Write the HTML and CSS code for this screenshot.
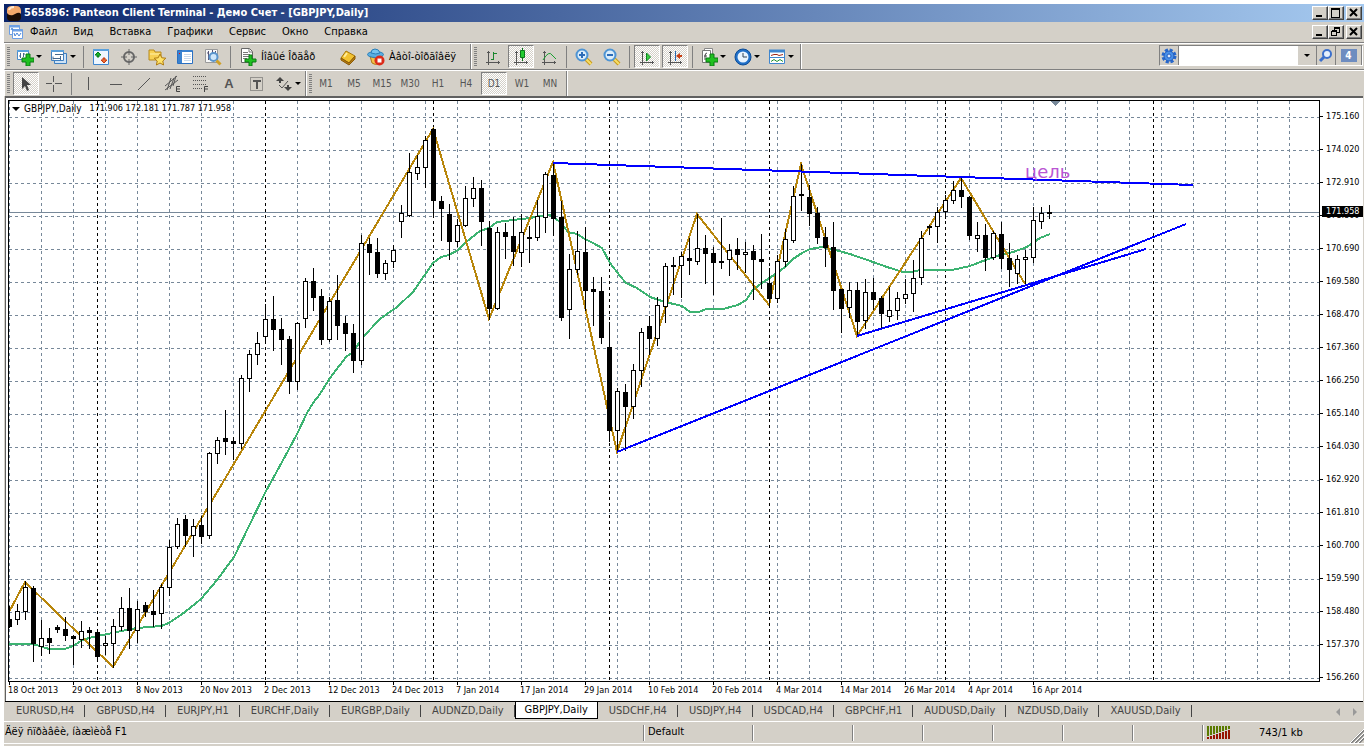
FILE: index.html
```html
<!DOCTYPE html>
<html lang="ru">
<head>
    <meta charset="UTF-8">
    <meta name="viewport" content="width=device-width, initial-scale=1.0">
    <title>565896: Panteon Client Terminal</title>
    <link rel="stylesheet" href="styles.css">
</head>
<body>
    <div class="window">
        <header class="title-bar">
            <svg class="app-icon" width="16" height="16" viewBox="0 0 16 16">
                <rect x="1" y="7" width="14" height="9" rx="4" fill="#1c0d05"/>
                <path d="M1 8V5q0-4 5-4h4q5 0 5 5v3q-1-2-4-1l-4 2q-4 1-6-2z" fill="#f4a86a"/>
                <path d="M3 5q1-3 5-3" stroke="#ffe9cf" stroke-width="2" fill="none"/>
            </svg>
            <h1>565896: Panteon Client Terminal - Демо Счет - [GBPJPY,Daily]</h1>
            <div class="window-buttons">
                <button aria-label="Minimize"><svg width="10" height="10"><path d="M1 8h6" stroke="#000" stroke-width="2"/></svg></button>
                <button aria-label="Maximize"><svg width="10" height="10" shape-rendering="crispEdges"><path d="M.5 1v8.500h8V1" stroke="#000" fill="none"/><path d="M0 1h9" stroke="#000" stroke-width="2"/></svg></button>
                <button class="close" aria-label="Close"><svg width="10" height="10"><path d="M1 1l7 7M8 1l-7 7" stroke="#000" stroke-width="2"/></svg></button>
            </div>
        </header>

        <nav class="menu-bar">
            <svg class="menu-icon" width="16" height="16" viewBox="0 0 16 16">
                <g fill="#fff" stroke="#6c9fe4"><path d="M1.500 1.500h10v9h-10z"/><path d="M4.500 5.500h10v9h-10z"/></g>
                <path d="M1 2.500h11M4 6.500h11" stroke="#6c9fe4" stroke-width="2"/>
                <path d="M3 6l1-2 1 2M6 9l1 3 2-3 2 3 2-3" stroke="#4a86d8" fill="none"/>
            </svg>
            <a href="#">Файл</a>
            <a href="#">Вид</a>
            <a href="#">Вставка</a>
            <a href="#">Графики</a>
            <a href="#">Сервис</a>
            <a href="#">Окно</a>
            <a href="#">Справка</a>
            <div class="window-buttons">
                <button aria-label="Minimize chart"><svg width="10" height="10"><path d="M1 8h6" stroke="#000" stroke-width="2"/></svg></button>
                <button aria-label="Restore chart"><svg width="10" height="10" shape-rendering="crispEdges"><path d="M3.500 3V.5h5v5H6M3 1.500h6M.5 4v4.500h5v-5h-5M0 4.500h6" stroke="#000" fill="none"/></svg></button>
                <button class="close" aria-label="Close chart"><svg width="10" height="10"><path d="M1 1l7 7M8 1l-7 7" stroke="#000" stroke-width="2"/></svg></button>
            </div>
        </nav>

        <div class="toolbar-row">
            <div class="toolbar">
                <i class="grip"></i>
                <button class="tool drop" aria-label="New chart">
                    <svg width="18" height="18"><path d="M1.500 2.500h11v9h-11z" fill="#fff" stroke="#4a8ccb"/><path d="M1 3h12" stroke="#5aa0dc" stroke-width="2"/><path d="M4.500 5v5M3 8h2M7.500 5v4M7 6h2" stroke="#46698c"/><path d="M10 6h4v4h4v4h-4v4h-4v-4H6v-4h4z" fill="#20c020" stroke="#0a7a14"/></svg>
                </button>
                <button class="tool drop" aria-label="Profiles">
                    <svg width="18" height="18"><path d="M4.500 5.500h12v10h-12z" fill="#cfe3f6" stroke="#3f7fc0"/><path d="M1.500 2.500h12v10h-12z" fill="#fff" stroke="#3f7fc0"/><path d="M1 3h13" stroke="#5aa0dc" stroke-width="2"/><path d="M3 10.500h8M3 8.500v3M10.500 8v4M5 6.500h8" stroke="#46698c"/></svg>
                </button>
                <i class="sep"></i>
                <button class="tool" aria-label="Market watch">
                    <svg width="18" height="18"><path d="M1.500 1.500h15v15h-15z" fill="#eef6ff" stroke="#3f86cf"/><path d="M1 2h16" stroke="#5aa0dc" stroke-width="2"/><path d="M6 4l3 3H7v2H5V7H3z" fill="#18b428" stroke="#087a18"/><path d="M12 15l-3-3h2v-2h2v2h2z" fill="#f07038" stroke="#c03a10"/></svg>
                </button>
                <button class="tool" aria-label="Data window">
                    <svg width="18" height="18" fill="none" stroke="#666"><circle cx="9" cy="9" r="5" stroke-width="2"/><path d="M9 1v6M9 11v6M1 9h6M11 9h6" stroke-width="1"/></svg>
                </button>
                <button class="tool" aria-label="Navigator">
                    <svg width="18" height="18"><path d="M1 2h5l1 2h6v8H1z" fill="#f7d154" stroke="#b78a1c"/><path d="M2 6h10" stroke="#fff0a8"/><path d="M12 6l1.800 3.800 4 .4-3 2.800.8 4-3.600-2-3.600 2 .8-4-3-2.800 4-.4z" fill="#ffe36a" stroke="#b07c10"/></svg>
                </button>
                <button class="tool" aria-label="Terminal">
                    <svg width="18" height="18"><path d="M1.500 2.500h15v13h-15z" fill="#fff" stroke="#2a70c2"/><path d="M2 3h4v12H2z" fill="#3a82d0"/><path d="M6 3h10" stroke="#3a82d0" stroke-width="2"/><path d="M8 6.500h7M8 8.500h7M8 10.500h7M8 12.500h7" stroke="#c8d8ea"/><path d="M3 5.500h1" stroke="#f00"/></svg>
                </button>
                <button class="tool" aria-label="Strategy tester">
                    <svg width="18" height="18"><path d="M1.500 1.500h12v13h-12z" fill="#f8f8f8" stroke="#9a9a9a"/><path d="M4.500 3v9M3 5h2M8.500 2v5M11.500 3v6" stroke="#557"/><circle cx="9.500" cy="9" r="4" fill="#cfe6fa" stroke="#5a94cc" stroke-width="2"/><path d="M12.500 12.500l4 4" stroke="#cfa028" stroke-width="3"/></svg>
                </button>
                <i class="sep"></i>
                <button class="tool wide">
                    <svg width="18" height="18"><path d="M2.500 .5h8l3 3v11h-11z" fill="#fff" stroke="#666"/><path d="M10 1v3h3M4 4.500h5M4 6.500h7M4 8.500h6M4 10.500h4" stroke="#777" fill="none"/><path d="M10 7h3v4h4v3h-4v4h-3v-4H6v-3h4z" fill="#20c020" stroke="#0a7a14"/></svg>
                    Íîâûé Îðäåð
                </button>
                <button class="tool" aria-label="MetaEditor">
                    <svg width="18" height="18"><path d="M2 10l5-7 9 5-6 7z" fill="#f2c230" stroke="#a87708"/><path d="M2 10l8 5 6-7v3l-6 6-8-5z" fill="#b77d10" stroke="#8a5a08"/><path d="M5 9l3-4" stroke="#ffec9a" stroke-width="2"/></svg>
                </button>
                <button class="tool wide">
                    <svg width="18" height="18"><path d="M3 8q6 4 12 0l-2 7q-5 3-8 0z" fill="#f2c14a" stroke="#b07a18"/><ellipse cx="8.500" cy="6.500" rx="8" ry="3" fill="#5aaee0" stroke="#2a7eb8"/><path d="M4 5q0-4 4-4t5 4q-4 2-9 0z" fill="#78c4ee" stroke="#2a7eb8"/><circle cx="12.500" cy="12.500" r="5" fill="#dc2a18"/><path d="M10.500 10.500h4v4h-4z" fill="#fff"/></svg>
                    Àâòî-òîðãîâëÿ
                </button>
            </div>
            <div class="toolbar">
                <i class="grip"></i>
                <button class="tool" aria-label="Bar chart">
                    <svg width="18" height="18" fill="none"><path d="M4.500 3v14M2 14.500h14M3 4.500h3M14.500 13v3" stroke="#555"/><path d="M9.500 4v8M7 11.500h2M10 5.500h3" stroke="#18862c"/></svg>
                </button>
                <button class="tool pressed" aria-label="Candlesticks">
                    <svg width="18" height="18" fill="none"><path d="M4.500 3v14M2 14.500h14M3 4.500h3M14.500 13v3" stroke="#555"/><path d="M10.500 0v13" stroke="#087818"/><path d="M8.500 2.500h4v7h-4z" fill="#22cc30" stroke="#087818"/></svg>
                </button>
                <button class="tool" aria-label="Line chart">
                    <svg width="18" height="18" fill="none"><path d="M4.500 3v14M2 14.500h14M3 4.500h3M14.500 13v3" stroke="#555"/><path d="M3 12q6-10 9-5l4 4" stroke="#18a030"/></svg>
                </button>
                <i class="sep"></i>
                <button class="tool" aria-label="Zoom in">
                    <svg width="18" height="18"><path d="M11 11l5 5" stroke="#c89a1c" stroke-width="4"/><path d="M11 11l5 5" stroke="#f6de68" stroke-width="2"/><circle cx="7" cy="7" r="5.500" fill="#dceefb" stroke="#4e94d4" stroke-width="2"/><path d="M4 7h6M7 4v6" stroke="#2c6cb8" stroke-width="2"/></svg>
                </button>
                <button class="tool" aria-label="Zoom out">
                    <svg width="18" height="18"><path d="M11 11l5 5" stroke="#c89a1c" stroke-width="4"/><path d="M11 11l5 5" stroke="#f6de68" stroke-width="2"/><circle cx="7" cy="7" r="5.500" fill="#dceefb" stroke="#4e94d4" stroke-width="2"/><path d="M4 7h6" stroke="#2c6cb8" stroke-width="2"/></svg>
                </button>
                <i class="sep"></i>
                <button class="tool pressed" aria-label="Auto scroll">
                    <svg width="18" height="18" fill="none"><path d="M4.500 3v14M2 14.500h14M3 4.500h3M14.500 13v3" stroke="#555"/><path d="M8.500 5l4 4-4 4z" fill="#38d040" stroke="#0c8420"/></svg>
                </button>
                <button class="tool pressed" aria-label="Chart shift">
                    <svg width="18" height="18" fill="none"><path d="M4.500 3v14M2 14.500h14M3 4.500h3M14.500 13v3" stroke="#555"/><path d="M9.500 3v10" stroke="#2868b0"/><path d="M10 8l4-3v2h2v2h-2v2z" fill="#c83c10"/></svg>
                </button>
                <i class="sep"></i>
                <button class="tool drop" aria-label="Indicators">
                    <svg width="18" height="18"><path d="M4.500 .5h8v12h-8z" fill="#fff" stroke="#888"/><path d="M2.500 2.500h8v12h-8z" fill="#fff" stroke="#777"/><path d="M7 5q-2 0-2 3v4M4 8h3" stroke="#444" fill="none"/><path d="M10 6h4v4h4v4h-4v4h-4v-4H6v-4h4z" fill="#20c020" stroke="#0a7a14"/></svg>
                </button>
                <button class="tool drop" aria-label="Periods">
                    <svg width="18" height="18"><circle cx="9" cy="9" r="8" fill="#1f6fc8" stroke="#0c4c96"/><circle cx="9" cy="9" r="5.500" fill="#e8f4ff"/><path d="M9 5v4h4" stroke="#345" fill="none"/></svg>
                </button>
                <button class="tool drop" aria-label="Templates">
                    <svg width="18" height="18"><path d="M1.500 2.500h15v13h-15z" fill="#fff" stroke="#3f86cf"/><path d="M1 3h16" stroke="#3f86cf" stroke-width="3"/><path d="M1 9.500h16" stroke="#3f86cf"/><path d="M3 7.500l3-1h3l2 1 4-1" stroke="#a02818" fill="none"/><path d="M3 13.500l3-2 3 2 3-2 3 2" stroke="#209030" fill="none"/></svg>
                </button>
            </div>
            <form class="search">
                <button type="button" class="gear" aria-label="Search options"><svg width="16" height="16"><circle cx="8" cy="8" r="6" fill="none" stroke="#2868cc" stroke-width="3" stroke-dasharray="3 1.700"/><circle cx="8" cy="8" r="5" fill="#4a90e8" stroke="#1f5cc0"/><circle cx="8" cy="8" r="2" fill="#dceafe" stroke="#1f5cc0"/></svg></button>
                <input type="text" aria-label="Search">
                <button type="button" aria-label="Search history"><i class="arrow"></i></button>
                <button type="button" aria-label="Find"><svg width="16" height="16"><circle cx="9" cy="6" r="4" fill="#e6f0fd" stroke="#3c70cc" stroke-width="2"/><path d="M6 9l-4 4" stroke="#3c70cc" stroke-width="3"/></svg></button>
                <button type="button" class="notes" aria-label="Messages"><span>4</span></button>
            </form>
        </div>

        <div class="toolbar-row second">
            <div class="toolbar">
                <i class="grip"></i>
                <button class="tool pressed" aria-label="Cursor">
                    <svg width="18" height="18"><path d="M5 2v12l3-3 2 5 2-1-2-5h4z" fill="#444"/></svg>
                </button>
                <button class="tool" aria-label="Crosshair">
                    <svg width="18" height="18"><path d="M8.500 1v6M8.500 10v7M1 8.500h6M10 8.500h7" stroke="#555"/></svg>
                </button>
                <i class="sep"></i>
                <button class="tool" aria-label="Vertical line"><svg width="18" height="18"><path d="M8.500 2v13" stroke="#555"/></svg></button>
                <button class="tool" aria-label="Horizontal line"><svg width="18" height="18"><path d="M2 9.500h12" stroke="#555"/></svg></button>
                <button class="tool" aria-label="Trendline"><svg width="18" height="18"><path d="M2 15L14 3" stroke="#555"/></svg></button>
                <button class="tool" aria-label="Channel"><svg width="18" height="18"><path d="M1 11L13 1M1 15L14 5M3 15L7 3M6 14l4-11M9 11l3-10" stroke="#555"/><path d="M16 11.500h-3.500v5H16M13 14h3" stroke="#444" fill="none"/></svg></button>
                <button class="tool" aria-label="Fibonacci"><svg width="18" height="18"><path d="M1 1.500h14M1 5.500h14M1 9.500h14M1 13.500h10" stroke="#555" stroke-dasharray="1 1"/><path d="M16 11.500h-3.500V17M13 14h3" stroke="#444" fill="none"/></svg></button>
                <button class="tool letter">A</button>
                <button class="tool" aria-label="Text label"><svg width="18" height="18"><path d="M2.500 2.500h12v13h-12z" fill="none" stroke="#555" stroke-dasharray="1 1"/><path d="M5 6h8M9 6v8" stroke="#555" stroke-width="2"/></svg></button>
                <button class="tool drop" aria-label="Arrows"><svg width="18" height="18"><path d="M5 2l4 4H6v2H4V6H1zM13 16l-4-4h3v-2h2v2h3z" fill="#444"/><path d="M4 10l3 3 6-7" stroke="#555" fill="none"/></svg></button>
            </div>
            <div class="toolbar periods">
                <i class="grip"></i>
                <button class="tool">M1</button>
                <button class="tool">M5</button>
                <button class="tool">M15</button>
                <button class="tool">M30</button>
                <button class="tool">H1</button>
                <button class="tool">H4</button>
                <button class="tool pressed">D1</button>
                <button class="tool">W1</button>
                <button class="tool">MN</button>
            </div>
        </div>

        <main class="chart">
            <div class="plot">
                <svg id="plot"></svg>
                <div class="plot-title"><i class="arrow"></i><span class="symbol">GBPJPY,Daily</span><span>171.906 172.181 171.787 171.958</span></div>
            </div>
            <div class="price-axis" id="prices"><span class="price-tag">171.958</span></div>
            <div class="date-axis" id="dates"></div>
        </main>

        <nav class="tabs">
            <a href="#">EURUSD,H4</a>
            <a href="#">GBPUSD,H4</a>
            <a href="#">EURJPY,H1</a>
            <a href="#">EURCHF,Daily</a>
            <a href="#">EURGBP,Daily</a>
            <a href="#">AUDNZD,Daily</a>
            <a href="#" class="active">GBPJPY,Daily</a>
            <a href="#">USDCHF,H4</a>
            <a href="#">USDJPY,H4</a>
            <a href="#">USDCAD,H4</a>
            <a href="#">GBPCHF,H1</a>
            <a href="#">AUDUSD,Daily</a>
            <a href="#">NZDUSD,Daily</a>
            <a href="#">XAUUSD,Daily</a>
            <div class="tab-scroll">
                <button aria-label="Scroll left"><svg width="6" height="8"><path d="M5 0v8L1 4z" fill="#999"/></svg></button>
                <button aria-label="Scroll right"><svg width="6" height="8"><path d="M1 0v8l4-4z" fill="#999"/></svg></button>
            </div>
        </nav>

        <footer class="status-bar">
            <span class="help">Äëÿ ñïðàâêè, íàæìèòå F1</span>
            <span class="profile">Default</span>
            <span class="time"></span>
            <span></span>
            <span></span>
            <span></span>
            <span></span>
            <span></span>
            <span class="traffic">
                <svg width="24" height="13" id="traffic"></svg>
                743/1 kb
            </span>
            <svg class="resize" width="14" height="14"><path d="M1 14L14 1M5 14l9-9M9 14l5-5" stroke="#808080" stroke-width="2"/><path d="M0 14L14 0M4 14L14 4M8 14l6-6" stroke="#fff"/></svg>
        </footer>
    </div>

    <script src="chart.js"></script>
</body>
</html>
```
FILE: styles.css
```css
* {
    box-sizing: border-box;
}

body {
    margin: 0;
    padding: 4px 4px 0;
    min-height: 100vh;
    display: flex;
    background: #fff;
    color: #000;
    font-family: "DejaVu Sans Condensed", "DejaVu Sans", sans-serif;
    font-size: 11px;
    line-height: 14px;
}

a {
    color: inherit;
    text-decoration: none;
}

button {
    margin: 0;
    padding: 0;
    border: 0;
    background: none;
    color: inherit;
    font: inherit;
}

svg {
    display: block;
    flex: none;
}

.window {
    flex: 1;
    min-width: 0;
    display: flex;
    flex-direction: column;
    background: #d4d0c8;
}

/* Title and menu */
.title-bar {
    display: flex;
    align-items: center;
    height: 18px;
    padding: 0 2px;
    background: linear-gradient(to right, #0a246a, #a6caf0);
    color: #fff;
}

h1 {
    margin: 0 0 0 2px;
    font-size: 11px;
    font-weight: bold;
    white-space: nowrap;
}

.window-buttons {
    display: flex;
    margin-left: auto;
}

.window-buttons button {
    display: flex;
    align-items: center;
    justify-content: center;
    width: 16px;
    height: 14px;
    background: #d4d0c8;
    border: 1px solid;
    border-color: #fff #404040 #404040 #fff;
    box-shadow: inset -1px -1px #808080;
}

.window-buttons .close {
    margin-left: 2px;
}

.menu-bar {
    display: flex;
    align-items: center;
    height: 21px;
    padding: 0 2px 0 4px;
    border-bottom: 1px solid #808080;
}

.menu-bar a {
    padding: 0 8px;
}

.menu-bar .menu-icon + a {
    padding-left: 6px;
}

/* Toolbars */
.toolbar-row {
    display: flex;
    align-items: stretch;
    height: 27px;
    border-top: 1px solid #fff;
    border-left: 1px solid #fff;
    border-bottom: 1px solid #808080;
}

.second {
    height: 26px;
    border-bottom: 0;
}

.toolbar {
    display: flex;
    align-items: center;
    padding: 0 2px;
    border-right: 1px solid #808080;
    box-shadow: 1px 0 #fff;
}

.toolbar + .toolbar {
    margin-left: 1px;
}

.grip {
    width: 3px;
    height: 20px;
    margin-right: 2px;
    background: repeating-linear-gradient(#808080 0 1px, transparent 1px 2px);
}

.sep {
    width: 1px;
    height: 22px;
    margin: 0 3px;
    background: #808080;
}

.tool {
    display: flex;
    align-items: center;
    justify-content: center;
    width: 28px;
    height: 23px;
}

.pressed {
    width: 26px;
    margin: 0 1px;
    border: 1px solid;
    border-color: #808080 #fff #fff #808080;
    background: conic-gradient(#fff 25%, #d4d0c8 0 50%, #fff 0 75%, #d4d0c8 0) 0 0 / 2px 2px;
}

.drop {
    width: 34px;
    justify-content: flex-start;
    padding-left: 4px;
    gap: 2px;
}

.second .drop {
    width: 32px;
}

.drop::after,
.arrow {
    content: "";
    border: 3px solid transparent;
    border-top-color: #000;
    border-bottom: 0;
}

.wide {
    width: auto;
    min-width: 100px;
    justify-content: flex-start;
    padding: 0 12px 0 5px;
    gap: 4px;
    white-space: nowrap;
}

.letter {
    color: #555;
    font-family: "Liberation Sans", sans-serif;
    font-size: 13px;
    font-weight: bold;
}

.periods {
    color: #555;
    font-size: 10px;
}

.periods .grip {
    margin-right: 0;
}

.search {
    display: flex;
    width: 204px;
    height: 21px;
    margin: 1px 1px 0 auto;
    border: 1px solid;
    border-color: #808080 #fff #fff #808080;
    background: #fff;
}

.search input {
    flex: 1;
    min-width: 0;
    border: 0;
    padding: 0 4px;
    font: inherit;
}

.search button {
    display: flex;
    align-items: center;
    justify-content: center;
    width: 19px;
    background: #d4d0c8;
    border-right: 1px solid #808080;
}

.search .notes {
    width: 26px;
}

.notes span {
    width: 16px;
    height: 13px;
    background: #6d8cc0;
    color: #fff;
    font-size: 10px;
    font-weight: bold;
    line-height: 13px;
}

/* Chart window */
.chart {
    flex: 1;
    display: grid;
    grid-template-columns: 1fr 43px;
    grid-template-rows: minmax(400px, 1fr) 19px;
    padding: 2px 0 0 2px;
    margin: 0 1px;
    background: #fff;
    border-top: 2px solid #606060;
    border-left: 1px solid #606060;
    font-size: 9px;
    line-height: 11px;
}

.plot {
    position: relative;
    min-width: 0;
    min-height: 0;
    border: 1px solid #000;
}

.plot > svg {
    width: 100%;
    height: 100%;
}

.plot-title {
    position: absolute;
    top: 2px;
    left: 3px;
    display: flex;
    align-items: center;
    gap: 4px;
}

.plot-title .arrow {
    border-width: 4px 4px 0;
}

.symbol {
    margin-right: 4px;
    font-size: 10px;
}

.price-axis {
    position: relative;
    height: 0;
    min-height: 100%;
    overflow: hidden;
}

.price-axis div {
    display: flex;
    align-items: center;
    gap: 3px;
    height: 33px;
}

.price-axis div::before {
    content: "";
    width: 3px;
    height: 1px;
    background: #000;
}

.price-tag {
    position: absolute;
    top: 106px;
    left: 2px;
    right: 0;
    padding-left: 4px;
    background: #000;
    color: #fff;
}

.date-axis {
    grid-column: 1 / -1;
    display: flex;
    overflow: hidden;
}

.date-axis span {
    width: 64px;
    flex: none;
    white-space: nowrap;
}

.date-axis span::before {
    content: "";
    display: block;
    width: 1px;
    height: 3px;
    margin-left: 1px;
    background: #000;
}

/* Chart tabs */
.tabs {
    display: flex;
    height: 20px;
    margin: 0 1px;
    border-top: 1px solid #000;
    color: #444;
}

.tabs a {
    display: flex;
    align-items: center;
    padding: 0 11px;
    margin-bottom: 2px;
    white-space: nowrap;
    background: linear-gradient(#444, #444) right center / 1px 12px no-repeat;
}

.tabs .active {
    padding: 0 9px;
    background: #fff;
    border: 1px solid #000;
    border-top: 0;
    color: #000;
}

.tab-scroll {
    display: flex;
    gap: 11px;
    margin-left: auto;
    padding-right: 5px;
}

/* Status bar */
.status-bar {
    display: flex;
    align-items: center;
    height: 23px;
    margin-bottom: 2px;
    border-top: 1px solid #fff;
    border-bottom: 1px solid #fff;
}

.status-bar span {
    flex: none;
    width: 70px;
    height: 16px;
    padding-left: 4px;
    border-left: 1px solid #808080;
    box-shadow: inset 1px 0 #fff;
}

.status-bar .help {
    flex: 1;
    padding-left: 1px;
    border: 0;
    box-shadow: none;
}

.status-bar .profile {
    width: 109px;
}

.status-bar .time {
    width: 100px;
}

.status-bar .traffic {
    display: flex;
    align-items: center;
    gap: 28px;
    width: 148px;
}

.resize {
    align-self: flex-end;
}
```
FILE: chart.js
```js
const NS = 'http://www.w3.org/2000/svg';
const plot = document.getElementById('plot');

// one bar every 8px, the plot area starts at 9,101 of the terminal
const LEFT = 9;
const TOP = 101;
const STEP = 8;

// high, body top, body bottom, low, 1 = bull / 0 = bear
const bars = [
    [606,619,627,627,0],[604,611,619,624,1],[581,587,611,619,1],[586,588,644,661,0],[620,638,646,655,1],
    [628,638,643,653,0],[625,627,630,632,0],[617,629,636,640,0],[635,636,639,664,0],[621,631,639,647,1],
    [627,630,633,648,0],[632,632,657,661,0],[636,643,645,654,1],[619,626,643,667,1],[597,608,626,630,1],
    [588,608,631,648,0],[601,609,630,642,1],[602,605,612,616,0],[590,611,615,626,0],[584,587,613,628,1],
    [540,547,587,595,1],[518,524,546,548,1],[515,519,536,546,0],[519,526,535,556,1],[516,525,537,543,0],
    [452,453,535,538,1],[437,440,453,463,1],[410,438,442,454,0],[437,441,444,459,0],[375,378,443,448,1],
    [350,354,378,391,1],[332,343,354,364,1],[304,319,336,340,1],[296,319,330,350,0],[318,329,340,364,0],
    [336,339,382,393,0],[322,323,381,389,1],[278,281,318,327,1],[268,281,298,310,0],[289,296,340,344,0],
    [297,301,339,341,1],[275,300,326,339,0],[316,323,334,350,0],[324,333,361,372,0],[235,243,360,364,1],
    [238,244,253,274,0],[238,252,274,277,0],[260,263,273,279,1],[245,250,261,267,1],[205,213,221,237,1],
    [153,172,215,216,1],[155,167,173,179,1],[136,140,167,187,1],[128,129,201,216,0],[196,201,209,240,0],
    [204,214,242,259,0],[219,225,241,246,1],[186,198,225,226,1],[177,188,198,206,1],[180,188,222,245,0],
    [221,228,309,319,0],[227,232,308,309,1],[223,232,237,258,0],[217,236,252,265,0],[214,232,252,266,1],
    [226,237,239,262,0],[200,216,237,240,1],[172,174,217,232,1],[163,175,219,235,0],[201,217,318,320,0],
    [254,269,309,338,1],[231,251,269,274,1],[227,252,291,310,0],[277,289,292,325,0],[277,291,338,343,0],
    [322,347,431,441,0],[388,391,430,452,1],[384,392,407,450,0],[364,370,406,418,1],[328,332,370,386,1],
    [316,326,339,354,0],[297,305,338,345,1],[263,266,306,322,1],[257,265,267,294,0],[252,256,265,297,1],
    [238,258,261,274,0],[214,248,261,264,1],[235,248,254,283,0],[247,253,263,294,0],[218,261,263,268,0],
    [244,250,259,275,1],[238,249,255,269,0],[242,252,254,272,1],[245,251,260,299,0],[234,259,262,288,0],
    [268,283,299,306,0],[255,261,298,302,1],[229,239,261,266,1],[186,196,240,242,1],[164,194,196,210,0],
    [185,197,214,225,0],[207,213,238,243,0],[227,237,248,266,0],[222,247,291,309,0],[289,289,309,332,0],
    [282,290,307,317,1],[282,290,322,336,0],[279,292,320,328,1],[278,292,300,309,0],[296,298,314,327,0],
    [287,310,316,321,1],[292,298,310,319,1],[279,294,298,303,1],[260,278,293,311,1],[231,238,277,284,1],
    [225,226,228,234,0],[207,212,226,242,1],[195,200,211,218,1],[181,190,200,203,1],[178,190,197,207,0],
    [196,197,236,239,0],[222,235,238,251,1],[224,235,258,270,0],[231,233,257,259,1],[222,234,259,268,0],
    [243,258,270,286,0],[255,259,273,283,1],[250,257,259,285,1],[207,220,257,262,1],[207,213,221,228,1],
    [205,212,214,218,0]
];

const average = '9,644 33,644 49,649 65,649 73,646 81,641 89,638 97,636 113,633 121,631 137,628 161,626 169,623 185,612 201,599 217,580 234,557 265,493 288,451 297,434 307,413 313,403 320,394 330,378 346,357 353,352 363,337 380,319 397,307 413,292 433,263 441,257 449,255 458,250 465,243 480,231 489,228 497,222 513,220 530,218 540,216 550,215 560,222 568,232 577,234 585,239 593,243 602,248 610,263 620,276 626,283 637,288 650,297 665,302 682,306 690,312 699,312 706,309 723,309 738,305 746,300 753,290 762,283 777,273 785,267 793,259 802,253 810,249 822,247 835,250 850,254 873,262 887,267 903,272 912,272 920,270 952,270 970,266 983,261 1000,255 1013,252 1027,247 1040,238 1050,234';
const zigzag = '9,612 25,582 113,667 433,129 489,319 553,162 617,452 697,214 769,305 801,164 857,336 961,178 1025,284';
const trends = ['553,163 1193,185', '617,452 1186,224', '857,336 1146,249'];
const separators = [97, 265, 433, 609, 769, 945, 1153];

const prices = ['175.160', '174.020', '172.910', '171.800', '170.690', '169.580', '168.470', '167.360', '166.250',
    '165.140', '164.030', '162.920', '161.810', '160.700', '159.590', '158.480', '157.370', '156.260'];
const dates = ['18 Oct 2013', '29 Oct 2013', '8 Nov 2013', '20 Nov 2013', '2 Dec 2013', '12 Dec 2013', '24 Dec 2013',
    '7 Jan 2014', '17 Jan 2014', '29 Jan 2014', '10 Feb 2014', '20 Feb 2014', '4 Mar 2014', '14 Mar 2014',
    '26 Mar 2014', '4 Apr 2014', '16 Apr 2014'];

function add(parent, name, attrs) {
    const el = document.createElementNS(NS, name);
    for (const key in attrs) el.setAttribute(key, attrs[key]);
    parent.appendChild(el);
    return el;
}

function drawPlot() {
    const width = plot.clientWidth;
    const height = plot.clientHeight;
    plot.innerHTML = '';
    const g = add(plot, 'g', { transform: `translate(${-LEFT} ${-TOP})`, 'shape-rendering': 'crispEdges', fill: 'none' });

    // grid
    for (let x = LEFT; x < LEFT + width; x += STEP * 4) {
        add(g, 'path', { d: `M${x + 0.5} ${TOP}v${height}`, stroke: '#778899', 'stroke-dasharray': '3 3' });
    }
    for (let i = 0; i < prices.length; i++) {
        add(g, 'path', { d: `M${LEFT} ${117.5 + i * 33}h${width}`, stroke: '#778899', 'stroke-dasharray': '3 3' });
    }
    separators.forEach(x => add(g, 'path', { d: `M${x + 0.5} ${TOP}v${height}`, stroke: '#000', 'stroke-dasharray': '3 3' }));
    add(g, 'path', { d: `M${LEFT} 212.5h${width}`, stroke: '#778899' });
    add(g, 'path', { d: 'M1050 101h11l-5.500 5z', fill: '#778899' });

    // indicators
    add(g, 'polyline', { points: average, stroke: '#3cb371', 'stroke-width': 2 });
    add(g, 'polyline', { points: zigzag, stroke: '#b8860b', 'stroke-width': 2 });

    // candles
    bars.forEach(([high, top, bottom, low, bull], i) => {
        const x = LEFT + i * STEP;
        add(g, 'path', { d: `M${x + 0.5} ${high}V${low + 1}`, stroke: '#000' });
        add(g, 'rect', {
            x: x - 1.5, y: top + 0.5, width: 4, height: Math.max(bottom - top - (bull ? 0 : 1), 1),
            fill: bull ? '#fff' : '#000', stroke: '#000'
        });
    });

    trends.forEach(points => add(g, 'polyline', { points, stroke: '#00f', 'stroke-width': 2 }));
    const note = add(g, 'text', { x: 1025, y: 178, fill: '#ba55d3', 'font-family': 'DejaVu Sans, sans-serif', 'font-size': 18 });
    note.textContent = 'цель';
}

function fillAxis(id, tag, labels) {
    labels.forEach(label => {
        const el = document.createElement(tag);
        el.textContent = label;
        document.getElementById(id).appendChild(el);
    });
}

function drawTraffic() {
    const svg = document.getElementById('traffic');
    for (let i = 0; i < 8; i++) {
        add(svg, 'rect', { x: i * 3, y: 0, width: 2, height: 10 - i, fill: '#5a7a00' });
        add(svg, 'rect', { x: i * 3, y: 11 - i, width: 2, height: 2 + i, fill: '#961400' });
    }
}

fillAxis('prices', 'div', prices);
fillAxis('dates', 'span', dates);
drawTraffic();
drawPlot();
window.addEventListener('resize', drawPlot);
```
